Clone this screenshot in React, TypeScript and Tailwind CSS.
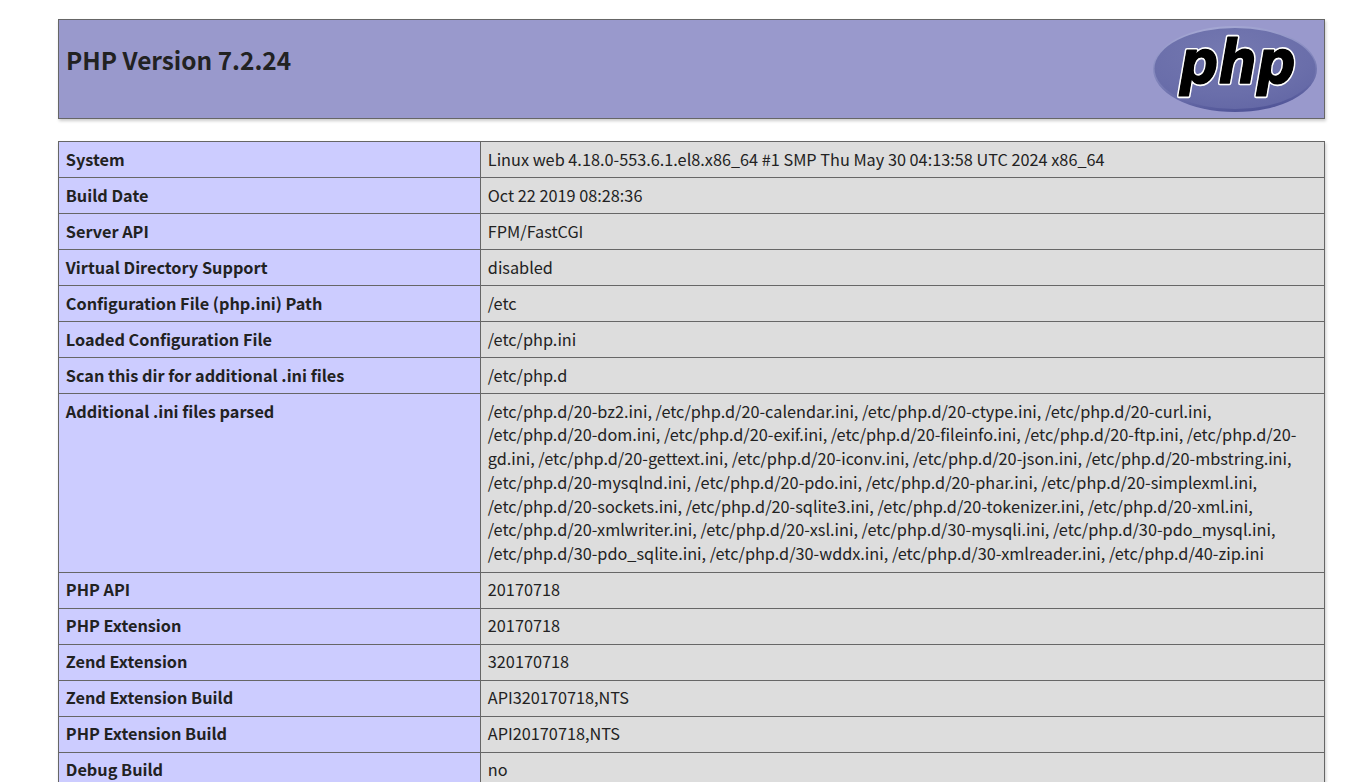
const rows: [string, string][] = [
  ["System", "Linux web 4.18.0-553.6.1.el8.x86_64 #1 SMP Thu May 30 04:13:58 UTC 2024 x86_64"],
  ["Build Date", "Oct 22 2019 08:28:36"],
  ["Server API", "FPM/FastCGI"],
  ["Virtual Directory Support", "disabled"],
  ["Configuration File (php.ini) Path", "/etc"],
  ["Loaded Configuration File", "/etc/php.ini"],
  ["Scan this dir for additional .ini files", "/etc/php.d"],
  ["Additional .ini files parsed", "/etc/php.d/20-bz2.ini, /etc/php.d/20-calendar.ini, /etc/php.d/20-ctype.ini, /etc/php.d/20-curl.ini, /etc/php.d/20-dom.ini, /etc/php.d/20-exif.ini, /etc/php.d/20-fileinfo.ini, /etc/php.d/20-ftp.ini, /etc/php.d/20-gd.ini, /etc/php.d/20-gettext.ini, /etc/php.d/20-iconv.ini, /etc/php.d/20-json.ini, /etc/php.d/20-mbstring.ini, /etc/php.d/20-mysqlnd.ini, /etc/php.d/20-pdo.ini, /etc/php.d/20-phar.ini, /etc/php.d/20-simplexml.ini, /etc/php.d/20-sockets.ini, /etc/php.d/20-sqlite3.ini, /etc/php.d/20-tokenizer.ini, /etc/php.d/20-xml.ini, /etc/php.d/20-xmlwriter.ini, /etc/php.d/20-xsl.ini, /etc/php.d/30-mysqli.ini, /etc/php.d/30-pdo_mysql.ini, /etc/php.d/30-pdo_sqlite.ini, /etc/php.d/30-wddx.ini, /etc/php.d/30-xmlreader.ini, /etc/php.d/40-zip.ini"],
  ["PHP API", "20170718"],
  ["PHP Extension", "20170718"],
  ["Zend Extension", "320170718"],
  ["Zend Extension Build", "API320170718,NTS"],
  ["PHP Extension Build", "API20170718,NTS"],
  ["Debug Build", "no"],
];

function PhpLogo() {
  return (
    <svg width="166" height="88" viewBox="0 0 166 88" className="shrink-0">
      <defs>
        <linearGradient id="rim" x1="0.35" y1="0" x2="0.6" y2="1">
          <stop offset="0" stopColor="#a6a9d4" />
          <stop offset="0.5" stopColor="#8084bb" />
          <stop offset="1" stopColor="#4f5396" />
        </linearGradient>
        <radialGradient id="ph" cx="0.45" cy="0.3" r="0.75">
          <stop offset="0" stopColor="#7478b0" />
          <stop offset="0.7" stopColor="#6a6eaa" />
          <stop offset="1" stopColor="#6367a5" />
        </radialGradient>
      </defs>
      <ellipse cx="84" cy="43" rx="82" ry="43" fill="url(#rim)" />
      <ellipse cx="84" cy="42.5" rx="80.5" ry="40.5" fill="url(#ph)" />
      <text x="86.5" y="57" textAnchor="middle" fontFamily="'DejaVu Sans', sans-serif" fontWeight="700" fontStyle="italic" fontSize="60" textLength="116" lengthAdjust="spacingAndGlyphs" fill="#000" stroke="#ffffff" strokeWidth="4.5" paintOrder="stroke" strokeLinejoin="round">php</text>
      <text x="86.5" y="57" textAnchor="middle" fontFamily="'DejaVu Sans', sans-serif" fontWeight="700" fontStyle="italic" fontSize="60" textLength="116" lengthAdjust="spacingAndGlyphs" fill="#000" stroke="#000000" strokeWidth="1.2" strokeLinejoin="round" aria-hidden="true">php</text>
    </svg>
  );
}

export default function App() {
  return (
    <div className="h-screen overflow-hidden bg-white pl-[58px] pt-[19px] text-[16.28px] leading-[23.75px] text-[#222222] [font-family:'Noto_Sans_CJK_JP','Noto_Sans',sans-serif]">
      <div className="flex h-[100px] w-[1267px] items-start justify-between border border-[#666666] bg-[#9999cc] px-[7px] pt-[6px] shadow-[1px_2px_3px_#cccccc]">
        <h1 className="mt-[16px] text-[24.4px] font-bold leading-[36px]">PHP Version 7.2.24</h1>
        <PhpLogo />
      </div>
      <table className="mt-[22px] w-[1267px] table-fixed border-collapse shadow-[1px_2px_3px_#cccccc]">
        <tbody>
          {rows.map(([k, v]) => (
            <tr key={k}>
              <td className="w-[422px] border border-[#666666] bg-[#ccccff] px-[6.8px] py-[5.635px] align-top font-bold">{k}</td>
              <td className="border border-[#666666] bg-[#dddddd] px-[6.8px] py-[5.635px] align-top">{v}</td>
            </tr>
          ))}
        </tbody>
      </table>
    </div>
  );
}
